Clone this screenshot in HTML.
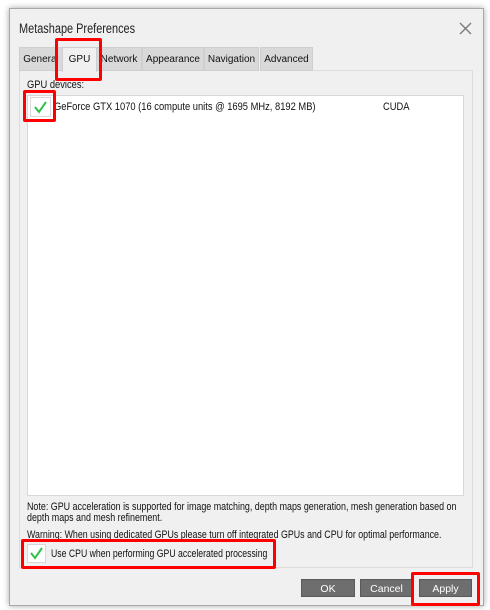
<!DOCTYPE html>
<html><head><style>
body{margin:0;width:490px;height:610px;background:#fff;position:relative;overflow:hidden;font-family:"Liberation Sans",sans-serif;font-size:11px;color:#111}
.a{position:absolute}
.s{transform:scaleX(.85);transform-origin:0 0;white-space:nowrap}
.dlg{left:9px;top:8px;width:473px;height:596px;background:#f0f0f0;border:1px solid #a8a8a8;box-shadow:0 0 6px rgba(0,0,0,.35)}
.tab{position:absolute;top:47px;height:24px;background:#d9d9d9;border:1px solid #cfcfcf;box-sizing:border-box;line-height:23px;text-align:center;font-size:10px;overflow:hidden;white-space:nowrap}
.red{position:absolute;border:3px solid #f00;box-sizing:border-box;border-radius:2px}
.btn{position:absolute;top:579px;height:18px;background:#6e6e6e;color:#fff;text-align:center;line-height:18px;font-size:10.5px;border:1px solid #5a5a5a;box-sizing:border-box}
.cb{position:absolute;background:#fff;border:1px solid #d8d8d8;box-sizing:border-box}
</style></head><body>
<div class="a dlg"></div>
<div class="a s" style="left:19px;top:21px;font-size:13.5px;color:#222;transform:scaleX(.81)">Metashape Preferences</div>
<svg class="a" style="left:459px;top:22px" width="13" height="13"><path d="M1 1L12 12M12 1L1 12" stroke="#777" stroke-width="1.3"/></svg>
<div class="a" style="left:19px;top:70px;width:454px;height:498px;background:#f0f0f0;border:1px solid #dcdcdc;box-sizing:border-box"></div>
<div class="tab" style="left:19px;width:44px">General</div>
<div class="tab" style="left:62px;width:35px;background:#f0f0f0;border-bottom:none;height:25px">GPU</div>
<div class="tab" style="left:96px;width:46px">Network</div>
<div class="tab" style="left:142px;width:62px">Appearance</div>
<div class="tab" style="left:204px;width:55px">Navigation</div>
<div class="tab" style="left:260px;width:53px">Advanced</div>
<div class="a s" style="left:27px;top:79px">GPU devices:</div>
<div class="a" style="left:27px;top:95px;width:437px;height:401px;background:#fff;border:1px solid #d8d8d8;box-sizing:border-box"></div>
<div class="cb" style="left:30px;top:97px;width:21px;height:20px"></div>
<svg class="a" style="left:33px;top:100px" width="15" height="14"><path d="M2 7L6 12L13 2" stroke="#2ec24a" stroke-width="2" fill="none"/></svg>
<div class="a s" style="left:54px;top:101px">GeForce GTX 1070 (16 compute units @ 1695 MHz, 8192 MB)</div>
<div class="a s" style="left:383px;top:101px">CUDA</div>
<div class="a s" style="left:27px;top:502px;line-height:11px;transform:scaleX(.81)">Note: GPU acceleration is supported for image matching, depth maps generation, mesh generation based on<br>depth maps and mesh refinement.</div>
<div class="a s" style="left:27px;top:529px;transform:scaleX(.805)">Warning: When using dedicated GPUs please turn off integrated GPUs and CPU for optimal performance.</div>
<div class="cb" style="left:27px;top:544px;width:19px;height:19px"></div>
<svg class="a" style="left:29px;top:546px" width="15" height="14"><path d="M2 7L6 12L13 2" stroke="#2ec24a" stroke-width="2" fill="none"/></svg>
<div class="a s" style="left:51px;top:548px;transform:scaleX(.79)">Use CPU when performing GPU accelerated processing</div>
<div class="btn" style="left:301px;width:54px">OK</div>
<div class="btn" style="left:360px;width:53px">Cancel</div>
<div class="btn" style="left:419px;width:53px">Apply</div>
<div class="red" style="left:55px;top:38px;width:47px;height:43px"></div>
<div class="red" style="left:23px;top:90px;width:33px;height:32px"></div>
<div class="red" style="left:21px;top:539px;width:255px;height:30px"></div>
<div class="red" style="left:411px;top:572px;width:69px;height:34px"></div>
</body></html>
